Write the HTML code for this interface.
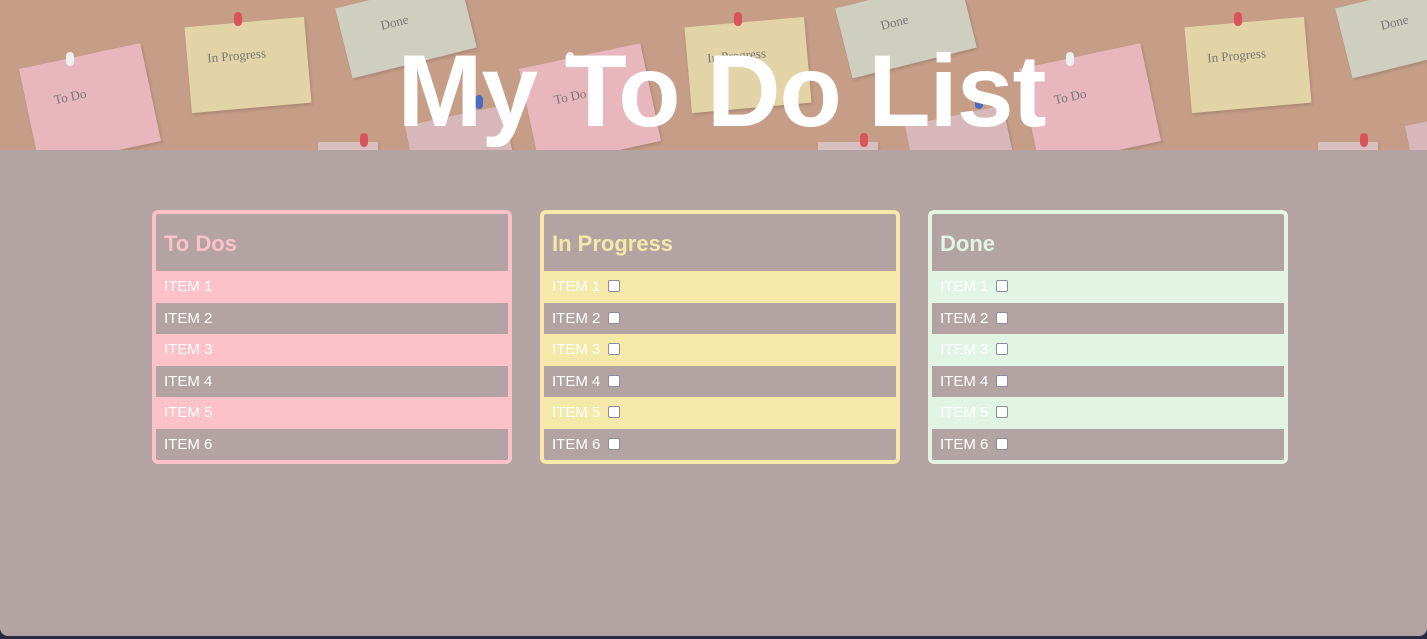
<!DOCTYPE html>
<html><head><style>
body{margin:0;width:1427px;height:639px;overflow:hidden;background:#2a2a40;font-family:"Liberation Sans",Arial,sans-serif;position:relative}
.hdr{position:absolute;left:0;top:0;width:1427px;height:150px;background:#c69e88;overflow:hidden}
.tile{position:absolute;top:0;width:500px;height:150px}
.n{position:absolute;box-shadow:1px 2px 3px rgba(0,0,0,.15)}
.n span{position:absolute;font-family:"Liberation Serif",serif;font-size:13px;color:#777}
.pin{position:absolute;width:8px;height:14px;border-radius:4px}
h1{position:absolute;left:8px;top:0;width:1427px;margin:0;text-align:center;color:#fff;font-size:102px;font-weight:bold;line-height:1;padding-top:40px;letter-spacing:-1px}
.main{position:absolute;left:0;top:150px;width:1427px;height:486px;background:#b3a3a3;border-radius:0 0 8px 8px}
.col{position:absolute;top:60px;width:352px;border:4px solid;border-radius:6px;}
.col .h{height:57px;color:inherit;font-weight:bold;font-size:22px;padding:17px 0 0 8px;box-sizing:border-box}
.row{height:31.5px;line-height:31.5px;color:#fff;font-size:15px;padding-left:8px;box-sizing:border-box}
.cb{display:inline-block;width:10px;height:10px;background:#fff;border:1.5px solid #8a8aa0;border-radius:2px;vertical-align:-1px;margin-left:8px}
</style></head><body>
<div class="hdr">
<div class="tile" style="left:0">
 <div class="n" style="left:28px;top:55px;width:124px;height:100px;background:#e7b7bd;transform:rotate(-12deg)"><span style="left:28px;top:30px">To Do</span></div>
 <div class="pin" style="left:66px;top:52px;background:#eee"></div>
 <div class="n" style="left:188px;top:22px;width:120px;height:86px;background:#e2d4a6;transform:rotate(-5deg)"><span style="left:20px;top:25px">In Progress</span></div>
 <div class="pin" style="left:234px;top:12px;background:#d9545a"></div>
 <div class="n" style="left:342px;top:-8px;width:128px;height:72px;background:#cfcfbf;transform:rotate(-14deg)"><span style="left:40px;top:20px">Done</span></div>
 <div class="n" style="left:410px;top:115px;width:100px;height:60px;background:#d7b7b9;transform:rotate(-12deg)"></div>
 <div class="n" style="left:318px;top:142px;width:60px;height:20px;background:#d8bfc0"></div>
 <div class="pin" style="left:360px;top:133px;background:#d9545a"></div>
 <div class="pin" style="left:475px;top:95px;background:#4a6bc0"></div>
</div>
<div class="tile" style="left:500px">
 <div class="n" style="left:28px;top:55px;width:124px;height:100px;background:#e7b7bd;transform:rotate(-12deg)"><span style="left:28px;top:30px">To Do</span></div>
 <div class="pin" style="left:66px;top:52px;background:#eee"></div>
 <div class="n" style="left:188px;top:22px;width:120px;height:86px;background:#e2d4a6;transform:rotate(-5deg)"><span style="left:20px;top:25px">In Progress</span></div>
 <div class="pin" style="left:234px;top:12px;background:#d9545a"></div>
 <div class="n" style="left:342px;top:-8px;width:128px;height:72px;background:#cfcfbf;transform:rotate(-14deg)"><span style="left:40px;top:20px">Done</span></div>
 <div class="n" style="left:410px;top:115px;width:100px;height:60px;background:#d7b7b9;transform:rotate(-12deg)"></div>
 <div class="n" style="left:318px;top:142px;width:60px;height:20px;background:#d8bfc0"></div>
 <div class="pin" style="left:360px;top:133px;background:#d9545a"></div>
 <div class="pin" style="left:475px;top:95px;background:#4a6bc0"></div>
</div>
<div class="tile" style="left:1000px">
 <div class="n" style="left:28px;top:55px;width:124px;height:100px;background:#e7b7bd;transform:rotate(-12deg)"><span style="left:28px;top:30px">To Do</span></div>
 <div class="pin" style="left:66px;top:52px;background:#eee"></div>
 <div class="n" style="left:188px;top:22px;width:120px;height:86px;background:#e2d4a6;transform:rotate(-5deg)"><span style="left:20px;top:25px">In Progress</span></div>
 <div class="pin" style="left:234px;top:12px;background:#d9545a"></div>
 <div class="n" style="left:342px;top:-8px;width:128px;height:72px;background:#cfcfbf;transform:rotate(-14deg)"><span style="left:40px;top:20px">Done</span></div>
 <div class="n" style="left:410px;top:115px;width:100px;height:60px;background:#d7b7b9;transform:rotate(-12deg)"></div>
 <div class="n" style="left:318px;top:142px;width:60px;height:20px;background:#d8bfc0"></div>
 <div class="pin" style="left:360px;top:133px;background:#d9545a"></div>
</div>
<h1>My To Do List</h1>
</div>
<div class="main">
 <div class="col" style="left:152px;border-color:#fdc1c9;color:#fdc1c9">
  <div class="h">To Dos</div>
  <div class="row" style="background:#fdc1c9">ITEM 1</div>
  <div class="row">ITEM 2</div>
  <div class="row" style="background:#fdc1c9">ITEM 3</div>
  <div class="row">ITEM 4</div>
  <div class="row" style="background:#fdc1c9">ITEM 5</div>
  <div class="row">ITEM 6</div>
 </div>
 <div class="col" style="left:540px;border-color:#f4e9a8;color:#f4e9a8">
  <div class="h">In Progress</div>
  <div class="row" style="background:#f4e9a8">ITEM 1<span class="cb"></span></div>
  <div class="row">ITEM 2<span class="cb"></span></div>
  <div class="row" style="background:#f4e9a8">ITEM 3<span class="cb"></span></div>
  <div class="row">ITEM 4<span class="cb"></span></div>
  <div class="row" style="background:#f4e9a8">ITEM 5<span class="cb"></span></div>
  <div class="row">ITEM 6<span class="cb"></span></div>
 </div>
 <div class="col" style="left:928px;border-color:#e2f4e3;color:#e2f4e3">
  <div class="h">Done</div>
  <div class="row" style="background:#e2f4e3">ITEM 1<span class="cb"></span></div>
  <div class="row">ITEM 2<span class="cb"></span></div>
  <div class="row" style="background:#e2f4e3">ITEM 3<span class="cb"></span></div>
  <div class="row">ITEM 4<span class="cb"></span></div>
  <div class="row" style="background:#e2f4e3">ITEM 5<span class="cb"></span></div>
  <div class="row">ITEM 6<span class="cb"></span></div>
 </div>
</div>
</body></html>
